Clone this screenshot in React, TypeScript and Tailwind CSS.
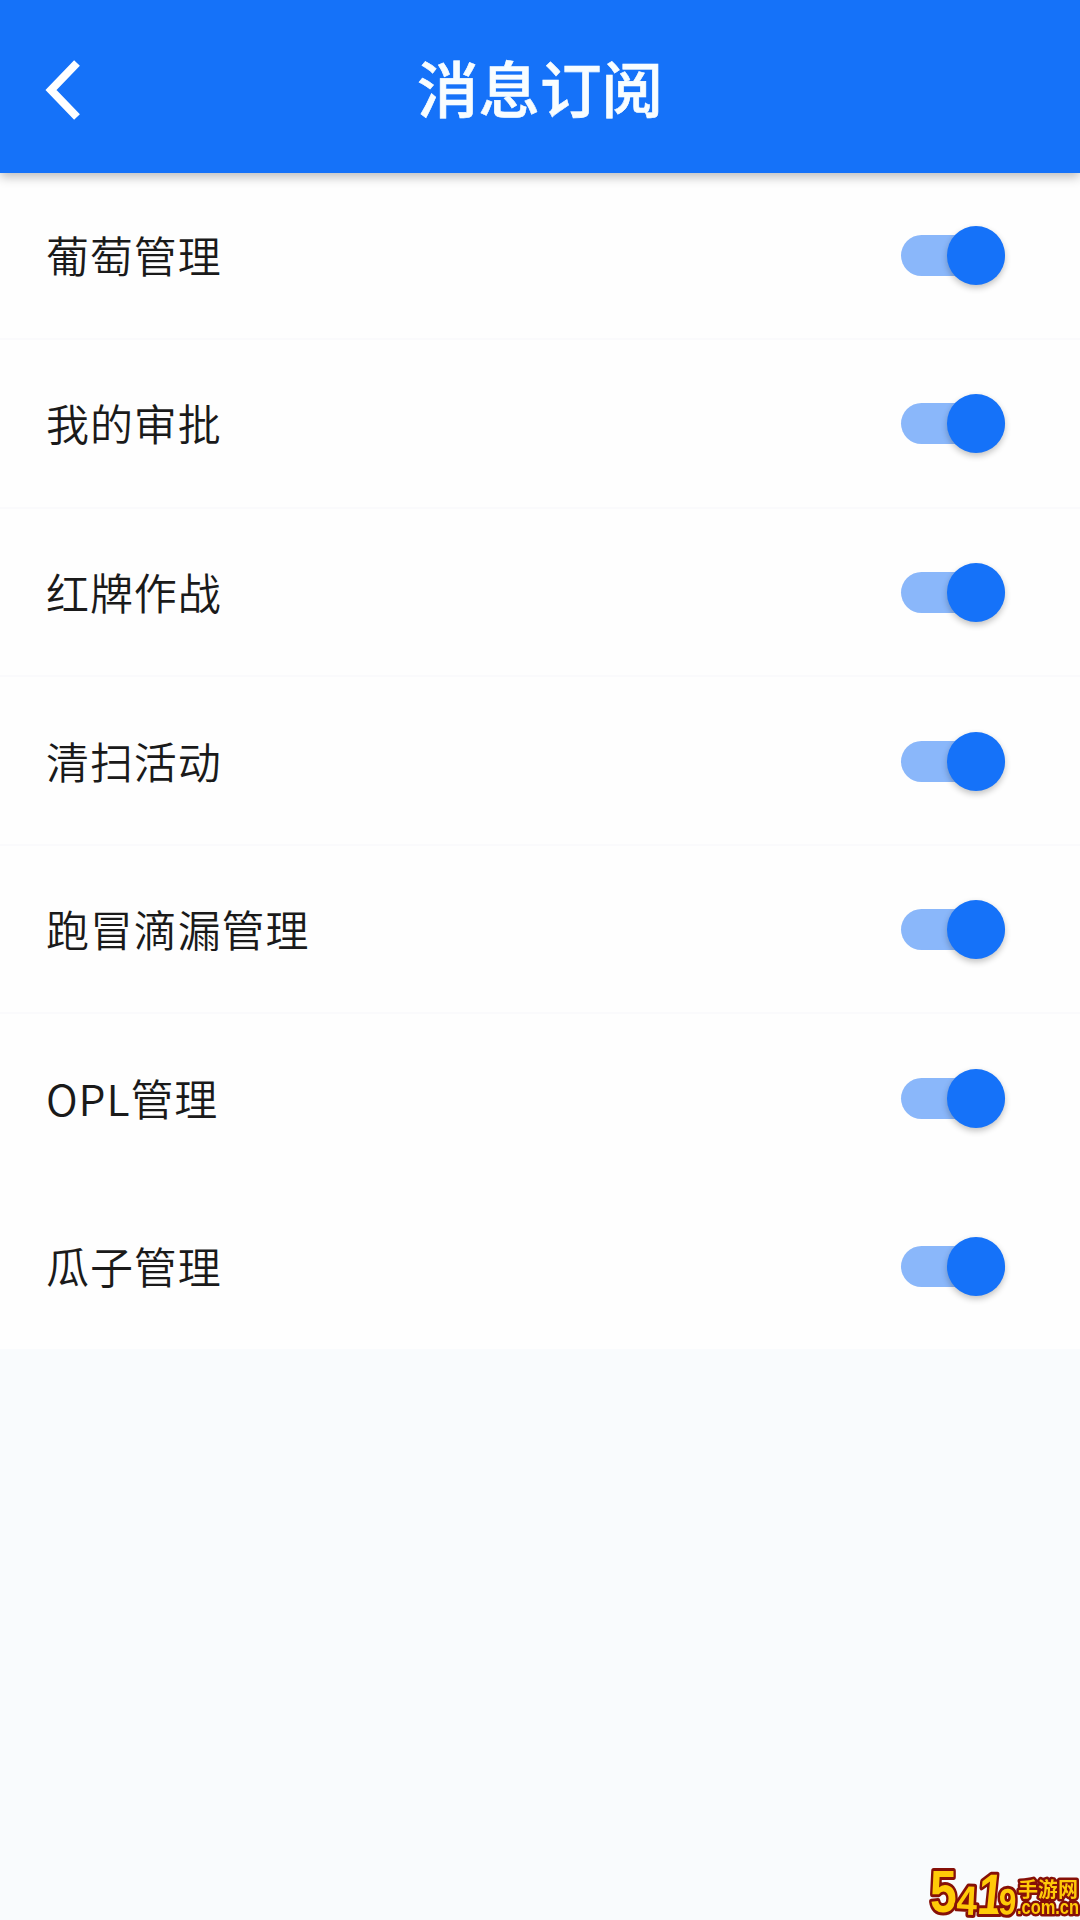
import {useState} from "react";

interface Subscription {
    id: string;
    label: string;
}

const SUBSCRIPTIONS: Subscription[] = [
    {id: "grape", label: "葡萄管理"},
    {id: "approval", label: "我的审批"},
    {id: "red-tag", label: "红牌作战"},
    {id: "cleaning", label: "清扫活动"},
    {id: "leak", label: "跑冒滴漏管理"},
    {id: "opl", label: "OPL管理"},
    {id: "melon", label: "瓜子管理"},
];

interface ToggleProps {
    label: string;
    checked: boolean;
    onChange: () => void;
}

const Toggle = ({label, checked, onChange}: ToggleProps) => {
    return (
        <button
            type="button"
            role="switch"
            aria-checked={checked}
            aria-label={label}
            onClick={onChange}
            className={[
                "mt-px flex h-[41px] w-[104px] items-center rounded-full",
                checked ? "justify-end bg-[#8ab7fa]" : "justify-start bg-zinc-300",
            ].join(" ")}
        >
            <span
                className={[
                    "h-[59px] w-[58px] shrink-0 rounded-full",
                    "shadow-[0_3px_6px_rgba(0,0,0,0.24)]",
                    checked ? "bg-[#1572f9]" : "bg-zinc-50",
                ].join(" ")}
            />
        </button>
    );
};

const Header = () => {
    return (
        <header className="relative z-10 grid h-[172.5px] grid-cols-[1fr_auto_1fr] items-center bg-[#1572f9] pt-2 shadow-[0_4px_10px_rgba(0,0,0,0.26)]">
            <button type="button" aria-label="返回" className="ml-[45px] w-9">
                <svg viewBox="0 0 36 60" className="h-[60px] w-9" fill="none" stroke="white" strokeWidth="8">
                    <path d="M32 3 6 30 32 57" />
                </svg>
            </button>
            <h1 className="-mt-2 text-[61.5px] leading-none font-medium text-[#f8fdff] [-webkit-text-stroke:0.6px_#f8fdff]">
                消息订阅
            </h1>
        </header>
    );
};

const SiteBadge = () => {
    return (
        <svg
            viewBox="0 0 152 54"
            className="fixed right-0 bottom-0 h-[54px] w-[152px] fill-[#ffca08] stroke-[#861008] font-['Liberation_Sans','Noto_Sans_CJK_SC',sans-serif] font-bold"
            strokeWidth="6"
            strokeLinejoin="round"
            paintOrder="stroke"
        >
            <text transform="translate(2 46) scale(.8 1)" fontSize="60">5</text>
            <text transform="translate(28 48) rotate(3) scale(.9 1)" fontSize="41">4</text>
            <text transform="translate(48 48) skewX(-6) scale(.8 1)" fontSize="57">1</text>
            <text transform="translate(70 48) rotate(3) scale(.86 1)" fontSize="37">9</text>
            <g strokeWidth="5">
                <text x="90" y="31" fontSize="20" textLength="60">手游网</text>
                <text x="89" y="48" fontSize="20" textLength="62" lengthAdjust="spacingAndGlyphs">.com.cn</text>
            </g>
        </svg>
    );
};

export default function App() {
    const [enabled, setEnabled] = useState<string[]>(SUBSCRIPTIONS.map((s) => s.id));

    const toggle = (id: string) => {
        setEnabled((prev) => (prev.includes(id) ? prev.filter((x) => x !== id) : [...prev, id]));
    };

    return (
        <div className="min-h-screen bg-[#f9fbfd] font-['Noto_Sans_CJK_SC',sans-serif]">
            <Header />
            <ul className="-mt-px bg-[#fefefe]">
                {SUBSCRIPTIONS.map((s) => (
                    <li
                        key={s.id}
                        className="flex h-[168.6px] items-center justify-between border-b-2 border-[#fafafc] pr-[75px] pl-[46px] nth-[6]:border-transparent last:h-[166px] last:border-b-0"
                    >
                        <span className="-mt-px text-[43px] leading-none font-[350] tracking-[0.9px] text-[#1a1a1a]">
                            {s.label}
                        </span>
                        <Toggle label={s.label} checked={enabled.includes(s.id)} onChange={() => toggle(s.id)} />
                    </li>
                ))}
            </ul>
            <SiteBadge />
        </div>
    );
}
